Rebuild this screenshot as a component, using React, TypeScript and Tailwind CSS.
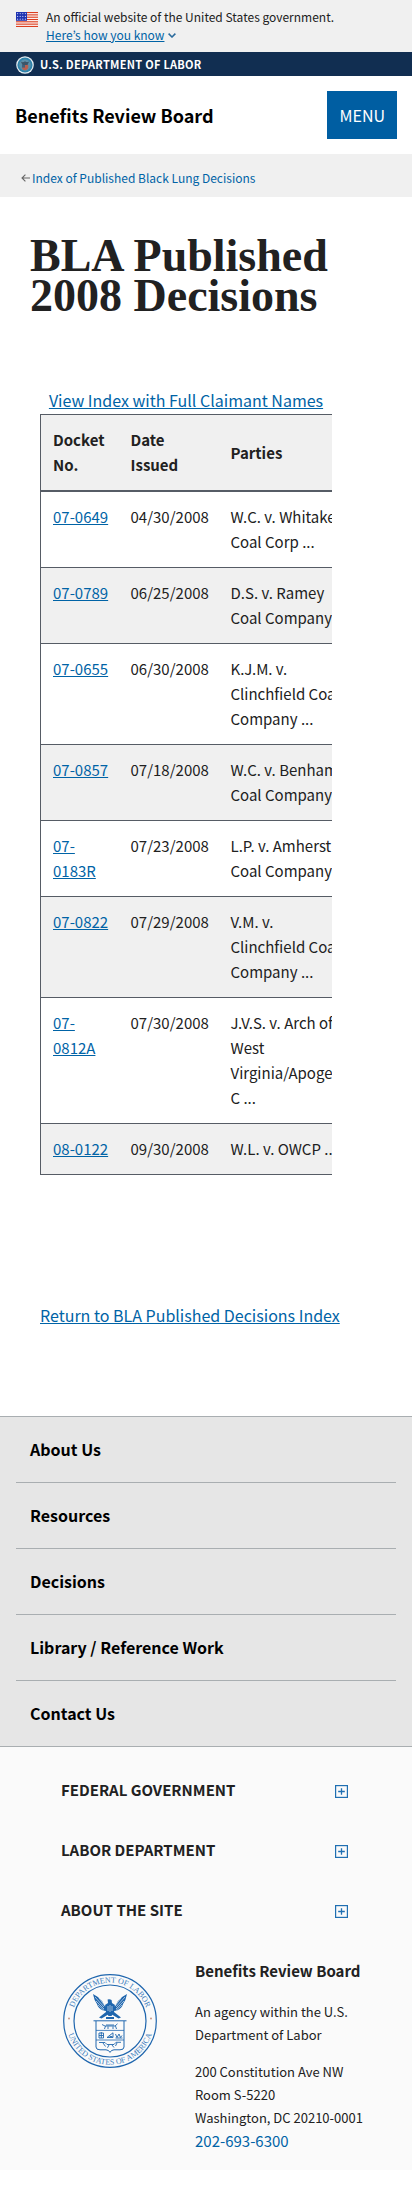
import React from "react";

const link = "text-[#0063a6]";

const decisions = [
  ["07-0649", "04/30/2008", "W.C. v. Whitaker Coal Corp ..."],
  ["07-0789", "06/25/2008", "D.S. v. Ramey Coal Company ..."],
  ["07-0655", "06/30/2008", "K.J.M. v. Clinchfield Coal Company ..."],
  ["07-0857", "07/18/2008", "W.C. v. Benham Coal Company ..."],
  ["07-0183R", "07/23/2008", "L.P. v. Amherst Coal Company ..."],
  ["07-0822", "07/29/2008", "V.M. v. Clinchfield Coal Company ..."],
  ["07-0812A", "07/30/2008", "J.V.S. v. Arch of West Virginia/Apogee C ..."],
  ["08-0122", "09/30/2008", "W.L. v. OWCP ..."],
];

const navItems = ["About Us", "Resources", "Decisions", "Library / Reference Work", "Contact Us"];
const footerSections = ["FEDERAL GOVERNMENT", "LABOR DEPARTMENT", "ABOUT THE SITE"];

function Flag() {
  return (
    <svg className="mt-1 h-[15px] w-[22px] shrink-0" viewBox="0 0 22 15" aria-hidden="true">
      <rect width="22" height="15" fill="#fff" />
      {[0, 1, 2, 3, 4, 5, 6].map((i) => (
        <rect key={i} y={i * 2.31} width="22" height="1.16" fill="#db3e1f" />
      ))}
      <rect width="11" height="8.8" fill="#1e33b1" />
      {[1.6, 4.4, 7.2].map((y) =>
        [1.6, 4.2, 6.8, 9.4].map((x) => <circle key={`${x}-${y}`} cx={x} cy={y} r="0.6" fill="#c9d0f5" />)
      )}
    </svg>
  );
}

function SmallSeal() {
  return (
    <svg className="mt-[2px] h-[18px] w-[18px] shrink-0" viewBox="0 0 18 18" aria-hidden="true">
      <circle cx="9" cy="9" r="8.8" fill="#e8eef2" />
      <circle cx="9" cy="9" r="7.6" fill="#2e83ab" />
      <circle cx="9" cy="9" r="5.8" fill="#5b8fa8" />
      <path d="M4.8 5.5 Q7 7 9 5.2 Q11.5 7 13.2 5.2 L11.5 9 H6.5 Z" fill="#3c5568" />
      <path d="M6 9 H12.2 V12 Q11.5 14 9 14.4 Q6.6 14 6 12 Z" fill="#b9604f" />
      <path d="M6 9 H9 V11.6 H6 Z" fill="#40617b" />
    </svg>
  );
}

function Seal() {
  return (
    <svg className="h-[94px] w-[94px]" viewBox="0 0 94 94" role="img" aria-label="Department of Labor seal">
      <defs>
        <path id="arc-top" d="M8.5 47 A38.5 38.5 0 0 1 85.5 47" />
        <path id="arc-bottom" d="M3.3 47 A43.7 43.7 0 0 0 90.7 47" />
      </defs>
      <g fill="none" stroke="#1f66ae">
        <circle cx="47" cy="47" r="46.3" strokeWidth="1.2" />
        <circle cx="47" cy="47" r="36" strokeWidth="1.2" />
      </g>
      <g fill="#3b7cbd" fontFamily="Liberation Serif, serif" fontSize="8">
        <text textAnchor="middle">
          <textPath href="#arc-top" startOffset="50%">DEPARTMENT OF LABOR</textPath>
        </text>
        <text textAnchor="middle">
          <textPath href="#arc-bottom" startOffset="50%">UNITED STATES OF AMERICA</textPath>
        </text>
      </g>
      <circle cx="6" cy="44.5" r="0.9" fill="#c58f7c" />
      <circle cx="88" cy="44.5" r="0.9" fill="#c58f7c" />
      <g fill="#1f66ae">
        <path d="M30 20 Q36 23 39 27 Q41 31 43 33 L43.5 37 L40 36.5 Q35 34 34 30 Q31 26 30 20Z" />
        <path d="M64 20 Q58 23 55 27 Q53 31 51 33 L50.5 37 L54 36.5 Q59 34 60 30 Q63 26 64 20Z" />
        <path d="M44.6 25.5 Q46.5 24.6 48.6 26 L49 29 L52 31 L51 38 L48.5 42 H45.5 L43 38 L42 31 L45 29 Z" />
        <path d="M43 38 L36 43.5 L38.5 44.5 L46 40 L48 40 L55.5 44.5 L58 43.5 L51 38Z" />
        <path d="M43 43 H51 V45 H43Z" />
      </g>
      <g stroke="#fafafa" strokeWidth="0.6" fill="none">
        <path d="M32 23 L41 33 M33 27 L41 35 M35 31 L41 36.5 M36 24 L42 32" />
        <path d="M62 23 L53 33 M61 27 L53 35 M59 31 L53 36.5 M58 24 L52 32" />
        <path d="M45 32 V37 M47 31 V38 M49 32 V37" />
      </g>
      <g stroke="#1f66ae" fill="none" strokeWidth="1">
        <path d="M30.5 46.8 H63.5 M33 47 V73 Q33 75.8 37 75.8 H43 Q46 76 47 78.4 Q48 76 51 75.8 H57 Q61 75.8 61 73 V47" />
        <path d="M33 56.4 H61 M33 66 H61" strokeWidth="0.8" />
      </g>
      <g stroke="#1f66ae" fill="none" strokeWidth="0.9">
        <path d="M39 50.5 L42 52 H52 L54.5 49.8 M42.5 52 L41.5 55 M45 52.5 V55 M50 52.5 V55 M52.5 52 L53.5 55 M43 51 H51" />
        <path d="M36 64 V59 H40.5 V64 Z M38.3 58 V64 M36 61.5 H40.5" />
        <path d="M44 63.5 L50 58.8 V63.5 Z M46.5 62.5 H49.5" />
        <path d="M52.5 60 L54 63.5 L56 60 L57.5 63.5 L59 61.5 M52.5 64 H59.5" />
        <path d="M36 68.5 H42 L44 70.5 H51 L53 68.3 H58 M40 69 L42.5 72.5 M46 71 L44.5 73.8 M49 71 L51 73.5 M54 69 L52.5 72" />
      </g>
    </svg>
  );
}

function PlusBox() {
  return (
    <svg className="mt-1 h-[13px] w-[13px]" viewBox="0 0 13 13" fill="none" stroke="#1f6fb2" aria-hidden="true">
      <rect x="0.6" y="0.6" width="11.8" height="11.8" strokeWidth="1.2" />
      <path d="M6.5 3.2 V9.8 M3.2 6.5 H9.8" strokeWidth="1.3" />
    </svg>
  );
}

export default function App() {
  return (
    <div className="min-h-screen bg-white font-['Noto_Sans_CJK_KR',sans-serif] text-[15px] leading-[25px] text-[#212121]">
      <section className="flex gap-2 bg-[#f0f0f0] px-4 py-2 text-[12px] leading-[18px]" aria-label="Government banner">
        <Flag />
        <div>
          <p>An official website of the United States government.</p>
          <button type="button" className={`flex items-center gap-1 ${link}`}>
            <span className="underline">Here’s how you know</span>
            <svg className="h-[5px] w-[8px]" viewBox="0 0 8 5" fill="none" stroke="#2a6a9c" strokeWidth="1.5" aria-hidden="true">
              <path d="M0.6 0.6 L4 4 L7.4 0.6" />
            </svg>
          </button>
        </div>
      </section>

      <div className="flex h-6 items-center gap-[6px] bg-[#112e51] px-4 text-[11px] leading-6 font-bold tracking-wide text-white">
        <SmallSeal />
        <a href="#dol">U.S. DEPARTMENT OF LABOR</a>
      </div>

      <header className="flex h-[78px] items-center justify-between px-[15px]">
        <a href="#home" className="text-[18px] font-bold text-black">Benefits Review Board</a>
        <button type="button" className="h-12 bg-[#005ea2] px-3 text-[16px] text-white">MENU</button>
      </header>

      <nav className="flex h-[43px] items-center bg-[#f0f0f0] px-[21px] pt-1 text-[12px]" aria-label="Breadcrumb">
        <a href="#index" className={`flex items-center gap-[2px] ${link}`}>
          <svg className="h-[8px] w-[9px]" viewBox="0 0 9 8" fill="none" stroke="#666" strokeWidth="1.1" aria-hidden="true">
            <path d="M9 4 H1 M4.4 0.6 L1 4 L4.4 7.4" />
          </svg>
          Index of Published Black Lung Decisions
        </a>
      </nav>

      <main className="pb-[88px]">
        <h1 className="px-[30px] pt-[39px] font-['Liberation_Serif',serif] text-[46px] leading-10 font-bold">
          BLA Published 2008 Decisions
        </h1>
        <div className="pt-[72px] pr-20 pl-10">
          <p className="pb-px text-center text-[16px]">
            <a href="#full" className={`underline ${link}`}>View Index with Full Claimant Names</a>
          </p>
          <div className="overflow-x-auto [scrollbar-width:none]">
            <table className="w-[319px] table-fixed border-collapse border border-[#565c65] text-left">
              <colgroup>
                <col className="w-[78px]" />
                <col className="w-[100px]" />
                <col />
              </colgroup>
              <thead className="bg-[#f0f0f0]">
                <tr className="border-b-2 border-[#565c65]">
                  {["Docket No.", "Date Issued", "Parties"].map((h) => (
                    <th key={h} scope="col" className="pt-3 pr-6 pb-[13px] pl-3 align-middle font-bold first:pr-2">{h}</th>
                  ))}
                </tr>
              </thead>
              <tbody>
                {decisions.map(([docket, date, parties]) => (
                  <tr key={docket} className="border-b border-[#565c65] align-top even:bg-[#f0f0f0]">
                    <td className="pt-3 pr-2 pb-[13px] pl-3">
                      <a href={`#${docket}`} className={`underline ${link}`}>{docket}</a>
                    </td>
                    <td className="pt-3 pr-2 pb-[13px] pl-3">{date}</td>
                    <td className="pt-3 pr-2 pb-[13px] pl-3">{parties}</td>
                  </tr>
                ))}
              </tbody>
            </table>
          </div>
          <p className="pt-[128px] text-[16px] whitespace-nowrap">
            <a href="#return" className={`underline ${link}`}>Return to BLA Published Decisions Index</a>
          </p>
        </div>
      </main>

      <footer>
        <nav className="border-y border-[#a9aeb1] bg-[#e6e6e6] px-4" aria-label="Footer">
          <ul className="divide-y divide-[#a9aeb1]">
            {navItems.map((item) => (
              <li key={item}>
                <a href="#nav" className="block px-[14px] py-5 text-[16px] font-bold text-black">{item}</a>
              </li>
            ))}
          </ul>
        </nav>
        <div className="bg-[#fafafa] px-[61px] pt-3">
          {footerSections.map((title) => (
            <button key={title} type="button" className="flex h-[60px] w-full items-center justify-between pr-[3px] font-bold">
              {title}
              <PlusBox />
            </button>
          ))}
        </div>
        <div className="flex gap-[38px] bg-[#fafafa] pt-5 pr-4 pb-[17px] pl-[63px]">
          <div className="shrink-0 pt-[15px]">
            <Seal />
          </div>
          <div className="text-[13px] leading-[23px]">
            <p className="text-[15px] font-bold">Benefits Review Board</p>
            <p className="pt-[18px]">
              An agency within the U.S.<br />
              Department of Labor
            </p>
            <address className="pt-[14px] not-italic">
              200 Constitution Ave NW<br />
              Room S-5220<br />
              Washington, DC 20210-0001<br />
              <a href="tel:202-693-6300" className={`text-[15px] ${link}`}>202-693-6300</a>
            </address>
          </div>
        </div>
      </footer>
    </div>
  );
}
